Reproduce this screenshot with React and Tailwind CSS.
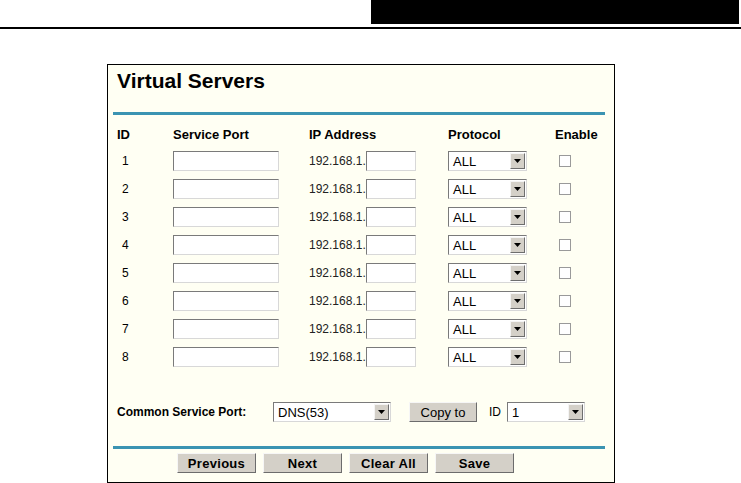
const rows = [1, 2, 3, 4, 5, 6, 7, 8];

function Sunken({ className = "", children }) {
  return (
    <div
      className={`flex h-[20px] items-center border border-t-[#7a7a7a] border-l-[#7a7a7a] border-r-[#d8d8d8] border-b-[#d8d8d8] bg-white ${className}`}
    >
      {children}
    </div>
  );
}

function Select({ value, className = "" }) {
  return (
    <Sunken className={className}>
      <span className="flex-1 pl-[4px] text-[13px] leading-none text-black">{value}</span>
      <span className="mr-[1px] flex h-[16px] w-[15px] items-center justify-center border border-t-[#f4f4f4] border-l-[#f4f4f4] border-r-[#6e6e6e] border-b-[#6e6e6e] bg-[#d4d0c8]">
        <svg width="7" height="4" viewBox="0 0 7 4">
          <path d="M0 0h7L3.5 4z" fill="#000" />
        </svg>
      </span>
    </Sunken>
  );
}

function Button({ children, bold = true, className = "" }) {
  return (
    <div
      className={`flex h-[20px] items-center justify-center border border-t-[#f6f6f6] border-l-[#f6f6f6] border-r-[#6c6c6c] border-b-[#6c6c6c] bg-[#d4d0c8] text-[13px] leading-none text-black ${bold ? "font-bold tracking-[0.3px]" : ""} ${className}`}
    >
      {children}
    </div>
  );
}

export default function App() {
  return (
    <div className="h-[483px] w-[741px] overflow-hidden bg-white font-['Liberation_Sans',Arial,sans-serif]">
      <div className="flex h-[24px] justify-end pr-[2px]">
        <div className="w-[368px] bg-black" />
      </div>
      <div className="mt-[3px] h-[2px] w-full bg-black" />

      <div className="ml-[107px] mt-[35px] h-[419px] w-[508px] border border-black bg-[#fffff3] pl-[9px]">
        <div className="pt-[4px] text-[21px] font-bold leading-[24px] text-black">Virtual Servers</div>
        <div className="mt-[19px] h-[3px] w-[492px] -ml-[4px] bg-[#3b94b2]" />

        <div className="mt-[8px] grid grid-cols-[56px_136px_139px_107px_60px] text-[12px] text-black">
          <div className="flex h-[24px] items-center text-[13px] font-bold">ID</div>
          <div className="flex h-[24px] items-center text-[13px] font-bold">Service Port</div>
          <div className="flex h-[24px] items-center text-[13px] font-bold">IP Address</div>
          <div className="flex h-[24px] items-center text-[13px] font-bold">Protocol</div>
          <div className="flex h-[24px] items-center text-[13px] font-bold">Enable</div>

          {rows.map((n) => (
            <div key={n} className="contents">
              <div className="flex h-[28px] items-center pl-[5px]">{n}</div>
              <div className="flex h-[28px] items-center">
                <Sunken className="w-[106px]" />
              </div>
              <div className="flex h-[28px] items-center">
                <span className="text-[#222]">192.168.1.</span>
                <Sunken className="w-[50px]" />
              </div>
              <div className="flex h-[28px] items-center">
                <Select value="ALL" className="w-[79px]" />
              </div>
              <div className="flex h-[28px] items-center pl-[4px]">
                <span className="block h-[12px] w-[12px] border border-[#9a9a9a] bg-white" />
              </div>
            </div>
          ))}
        </div>

        <div className="mt-[31px] flex h-[20px] items-center text-[12px] text-black">
          <span className="w-[156px] font-bold">Common Service Port:</span>
          <Select value="DNS(53)" className="w-[118px]" />
          <Button bold={false} className="ml-[18px] w-[68px]">Copy to</Button>
          <span className="ml-[12px] w-[18px]">ID</span>
          <Select value="1" className="w-[78px]" />
        </div>

        <div className="mt-[24px] h-[3px] w-[492px] -ml-[4px] bg-[#3b94b2]" />

        <div className="mt-[4px] flex gap-[7px] pl-[60px]">
          <Button className="w-[79px]">Previous</Button>
          <Button className="w-[79px]">Next</Button>
          <Button className="w-[79px]">Clear All</Button>
          <Button className="w-[79px]">Save</Button>
        </div>
      </div>
    </div>
  );
}
